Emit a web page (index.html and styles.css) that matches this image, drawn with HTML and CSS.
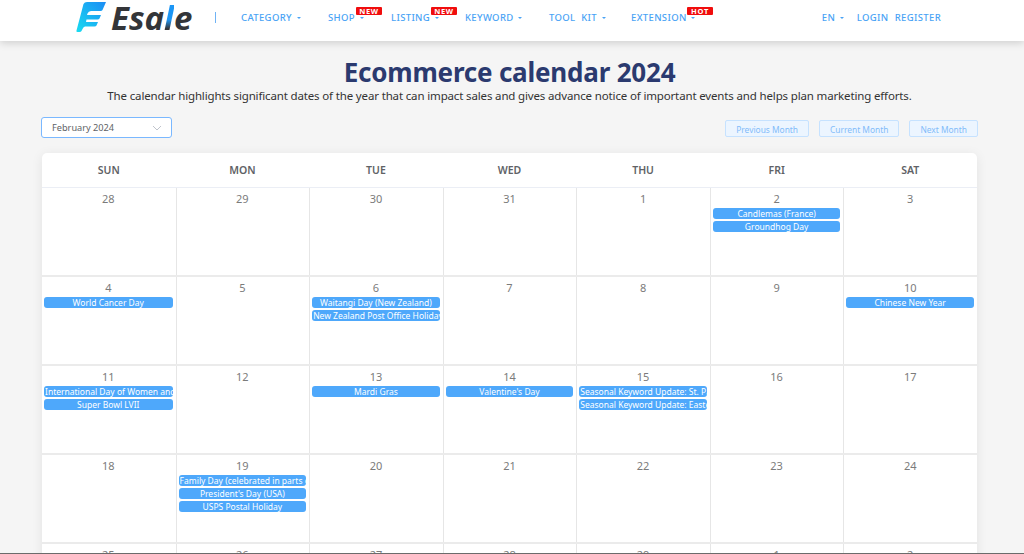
FILE: index.html
```html
<!DOCTYPE html>
<html lang="en">
<head>
  <meta charset="UTF-8" />
  <meta name="viewport" content="width=device-width, initial-scale=1.0" />
  <title>Ecommerce calendar 2024</title>
  <link rel="stylesheet" href="styles.css">
</head>
<body>
  <header class="topbar">
    <a class="logo" href="#">
      <svg class="logo-mark" width="32" height="32" viewBox="0 0 32 32">
        <defs>
          <linearGradient id="logoGrad" x1="0" y1="1" x2="1" y2="0">
            <stop offset="0" stop-color="#19dcf0" />
            <stop offset="1" stop-color="#1c8cf5" />
          </linearGradient>
        </defs>
        <path fill="url(#logoGrad)" d="M7.5 3Q8.5 1 11 1H30L26.5 9Q26 10 24.5 10H15Q12.5 10 11.5 12.5L11 14H25L23.5 17.5Q23 18.5 21.5 18.5H10.5L10 21H22L20.5 24.5Q20 25.5 18.5 25.5H9Q7.5 25.5 6.5 28L5.5 30Q5 31 3.5 31H1.5Q0 31 .5 29.5Z" />
      </svg>
      <span class="logo-text">Esa<span class="logo-l">l</span>e</span>
    </a>
    <span class="divider"></span>
    <nav class="nav">
      <a class="nav-item w-category" href="#">CATEGORY <i class="caret"></i></a>
      <a class="nav-item w-shop" href="#">SHOP <i class="caret"></i><b class="badge">NEW</b></a>
      <a class="nav-item w-listing" href="#">LISTING <i class="caret"></i><b class="badge">NEW</b></a>
      <a class="nav-item w-keyword" href="#">KEYWORD <i class="caret"></i></a>
      <a class="nav-item w-toolkit" href="#">TOOL&nbsp; KIT <i class="caret"></i></a>
      <a class="nav-item w-extension" href="#">EXTENSION <i class="caret"></i><b class="badge">HOT</b></a>
    </nav>
    <div class="nav-right">
      <a class="nav-item w-lang" href="#">EN <i class="caret"></i></a>
      <a class="nav-item w-login" href="#">LOGIN</a>
      <a class="nav-item" href="#">REGISTER</a>
    </div>
  </header>

  <main class="content">
    <h1>Ecommerce calendar 2024</h1>
    <p class="intro">The calendar highlights significant dates of the year that can impact sales and gives advance notice of important events and helps plan marketing efforts.</p>

    <div class="toolbar">
      <div class="month-select">
        <span>February 2024</span>
        <svg width="10" height="6" viewBox="0 0 10 6"><path d="M1 1l4 4 4-4" fill="none" stroke="#c0c4cc" stroke-width="1" /></svg>
      </div>
      <div class="month-btns">
        <button>Previous Month</button>
        <button>Current Month</button>
        <button>Next Month</button>
      </div>
    </div>

    <section class="calendar">
      <div class="week-head">
        <div>SUN</div><div>MON</div><div>TUE</div><div>WED</div><div>THU</div><div>FRI</div><div>SAT</div>
      </div>
      <div class="week">
        <div class="day"><span class="num">28</span></div>
        <div class="day"><span class="num">29</span></div>
        <div class="day"><span class="num">30</span></div>
        <div class="day"><span class="num">31</span></div>
        <div class="day"><span class="num">1</span></div>
        <div class="day"><span class="num">2</span>
          <div class="event">Candlemas (France)</div>
          <div class="event">Groundhog Day</div>
        </div>
        <div class="day"><span class="num">3</span></div>
      </div>
      <div class="week">
        <div class="day"><span class="num">4</span>
          <div class="event">World Cancer Day</div>
        </div>
        <div class="day"><span class="num">5</span></div>
        <div class="day"><span class="num">6</span>
          <div class="event">Waitangi Day (New Zealand)</div>
          <div class="event">New Zealand Post Office Holiday</div>
        </div>
        <div class="day"><span class="num">7</span></div>
        <div class="day"><span class="num">8</span></div>
        <div class="day"><span class="num">9</span></div>
        <div class="day"><span class="num">10</span>
          <div class="event">Chinese New Year</div>
        </div>
      </div>
      <div class="week">
        <div class="day"><span class="num">11</span>
          <div class="event">International Day of Women and Girls in Science</div>
          <div class="event">Super Bowl LVII</div>
        </div>
        <div class="day"><span class="num">12</span></div>
        <div class="day"><span class="num">13</span>
          <div class="event">Mardi Gras</div>
        </div>
        <div class="day"><span class="num">14</span>
          <div class="event">Valentine's Day</div>
        </div>
        <div class="day"><span class="num">15</span>
          <div class="event">Seasonal Keyword Update: St. Patrick's Day</div>
          <div class="event">Seasonal Keyword Update: Easter</div>
        </div>
        <div class="day"><span class="num">16</span></div>
        <div class="day"><span class="num">17</span></div>
      </div>
      <div class="week">
        <div class="day"><span class="num">18</span></div>
        <div class="day"><span class="num">19</span>
          <div class="event">Family Day (celebrated in parts of Canada)</div>
          <div class="event">President's Day (USA)</div>
          <div class="event">USPS Postal Holiday</div>
        </div>
        <div class="day"><span class="num">20</span></div>
        <div class="day"><span class="num">21</span></div>
        <div class="day"><span class="num">22</span></div>
        <div class="day"><span class="num">23</span></div>
        <div class="day"><span class="num">24</span></div>
      </div>
      <div class="week">
        <div class="day"><span class="num">25</span></div>
        <div class="day"><span class="num">26</span></div>
        <div class="day"><span class="num">27</span></div>
        <div class="day"><span class="num">28</span></div>
        <div class="day"><span class="num">29</span></div>
        <div class="day"><span class="num">1</span></div>
        <div class="day"><span class="num">2</span></div>
      </div>
    </section>
  </main>
  <div class="edge-line"></div>
</body>
</html>
```

FILE: styles.css
```css
html, body { height: 100%; overflow: hidden; }
body {
  margin: 0;
  background: #f5f5f5;
  color: #606266;
  font-family: "Noto Sans", "Open Sans", sans-serif;
}
a { text-decoration: none; color: inherit; }

/* top bar */
.topbar {
  height: 41px;
  background: #fff;
  box-shadow: 0 2px 8px rgba(0, 0, 0, 0.16);
  display: flex;
  align-items: center;
  padding-left: 76px;
  padding-right: 83px;
  position: relative;
}
.logo { display: flex; align-items: center; width: 139px; height: 41px; margin-top: -7px; }
.logo-mark { flex: none; }
.logo-text {
  font-family: "Open Sans", sans-serif;
  font-style: italic;
  font-weight: 700;
  font-size: 33px;
  line-height: 1;
  color: #333539;
  margin-left: 3px;
}
.logo-l {
  background: linear-gradient(#1c96f5 55%, #333539 75%);
  -webkit-background-clip: text;
  background-clip: text;
  color: transparent;
}
.divider { width: 1px; height: 11px; background: #6fb3f5; margin-right: 25px; margin-top: -7px; }
.nav { display: flex; margin-top: -6px; }
.nav-right { display: flex; margin-left: auto; margin-top: -6px; }
.nav-item {
  position: relative;
  font-size: 9.5px;
  font-weight: 500;
  letter-spacing: 0.35px;
  color: #4aa3f5;
  white-space: nowrap;
  display: block;
  line-height: 14px;
}
.w-category { width: 87px; }
.w-shop { width: 63px; }
.w-listing { width: 74px; }
.w-keyword { width: 84px; }
.w-toolkit { width: 82px; }
.w-lang { width: 35px; }
.w-login { width: 38px; }
.caret {
  display: inline-block;
  border: 2px solid transparent;
  border-top: 2.5px solid #4aa3f5;
  border-bottom: 0;
  vertical-align: 2px;
  margin-left: 2px;
}
.badge {
  position: absolute;
  top: -3.5px;
  width: 26px;
  text-align: center;
  background: #f00d0d;
  color: #fff;
  font-size: 7.5px;
  font-weight: 700;
  letter-spacing: 0.7px;
  line-height: 8px;
  border-radius: 1px;
}
.w-shop .badge { left: 28px; }
.w-listing .badge { left: 40px; }
.w-extension .badge { left: 56px; }

/* page head */
.content { padding: 0 46px 0 41px; }
h1 {
  margin: 14px 0 0;
  text-align: center;
  color: #2b3a6f;
  font-size: 26px;
  letter-spacing: -0.2px;
  font-weight: 700;
  line-height: 34px;
}
.intro {
  margin: 0;
  text-align: center;
  color: #333;
  font-size: 11.5px;
  letter-spacing: -0.15px;
  line-height: 14px;
}

/* month switch row */
.toolbar {
  display: flex;
  justify-content: space-between;
  align-items: flex-end;
  margin-top: 14px;
}
.month-select {
  width: 129px;
  height: 19px;
  background: #fff;
  border: 1px solid #7ab8ff;
  border-radius: 3px;
  display: flex;
  align-items: center;
  justify-content: space-between;
  font-size: 9.2px;
  color: #606266;
}
.month-select span { margin-left: 10px; }
.month-select svg { margin-right: 9px; }
.month-btns { display: flex; gap: 10px; margin-bottom: 1px; }
.month-btns button {
  height: 17px;
  background: #ecf5ff;
  border: 1px solid #c6e2ff;
  border-radius: 2px;
  color: #82bcfa;
  font-family: inherit;
  font-size: 8.4px;
  padding: 4px 10px 0;
  line-height: 1;
}

/* calendar */
.calendar {
  margin: 15px 1px 0;
  background: #fff;
  border-radius: 5px 5px 0 0;
  box-shadow: 0 2px 12px rgba(0, 0, 0, 0.08);
}
.week-head {
  display: grid;
  grid-template-columns: repeat(7, 1fr);
  height: 34px;
  align-items: center;
  text-align: center;
  font-size: 10.5px;
  font-weight: 600;
  color: #606266;
  border-bottom: 1px solid #ebeef5;
}
.week {
  display: grid;
  grid-template-columns: repeat(7, 1fr);
  height: 87px;
  border-bottom: 2px solid #ebebeb;
}
.day {
  min-width: 0;
  border-left: 1px solid #e6e6e6;
  padding: 4px 3px 0 2px;
  text-align: center;
}
.day:first-child { border-left: 0; }
.num {
  display: block;
  font-size: 11px;
  line-height: 14px;
  color: #7b7b7b;
  margin-bottom: 2px;
}
.event {
  height: 11px;
  line-height: 11px;
  margin-bottom: 2px;
  background: #4ea8fb;
  border-radius: 3px;
  color: #fff;
  font-size: 8.5px;
  white-space: nowrap;
  overflow: hidden;
  padding: 0 1px;
}

/* thin dark line along the window's lower edge */
.edge-line {
  position: fixed;
  left: 0;
  right: 0;
  bottom: 0;
  height: 1px;
  background: #6b6b6b;
}
```
